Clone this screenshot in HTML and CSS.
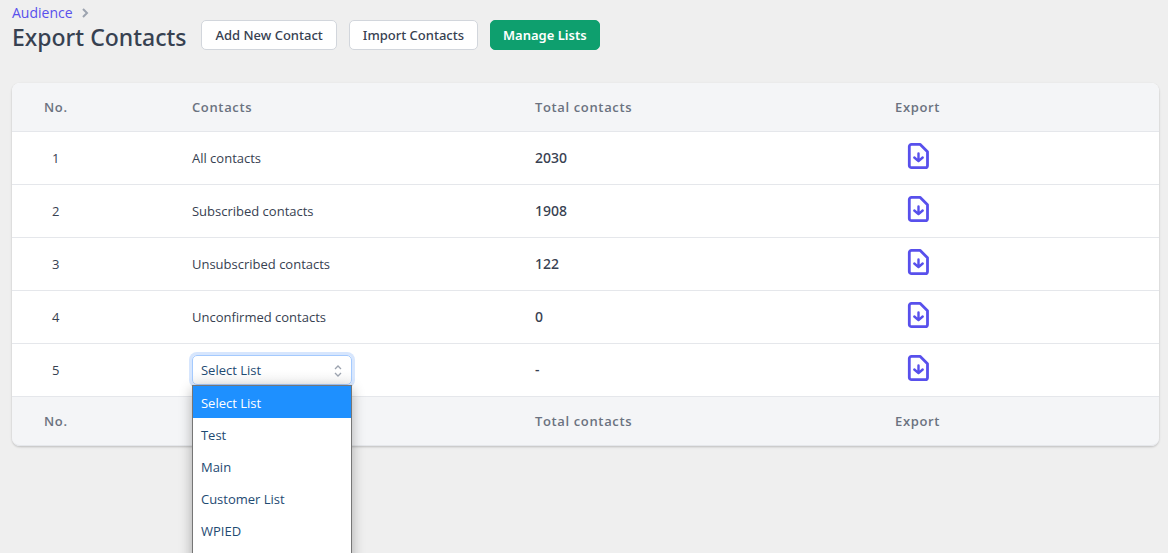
FILE: index.html
```html
<!DOCTYPE html>
<html lang="en">
<head>
<meta charset="utf-8">
<meta name="viewport" content="width=device-width, initial-scale=1">
<title>Export Contacts</title>
<link rel="stylesheet" href="styles.css">
</head>
<body>
<svg class="sprite" aria-hidden="true">
  <symbol id="file-download" viewBox="0 0 24 28">
    <path d="M4.300 2.300h8.700l7.500 7.500v13.600a2.300 2.300 0 0 1-2.300 2.300H4.600a2.300 2.300 0 0 1-2.300-2.300V4.600a2.300 2.300 0 0 1 2.300-2.300z" stroke-width="2.800"/>
    <path d="M11.500 11.500v7.500M7.300 15.500l4.200 3.700 4.200-3.700" stroke-width="2.400"/>
  </symbol>
</svg>
<main class="page">
  <header class="page-header">
    <div class="heading">
      <nav class="breadcrumb" aria-label="Breadcrumb">
        <a href="#">Audience</a>
        <svg class="chevron" viewBox="0 0 8 10" aria-hidden="true"><path d="M2 1l4 4-4 4"/></svg>
      </nav>
      <h1 class="title">Export Contacts</h1>
    </div>
    <div class="actions">
      <button class="btn" type="button">Add New Contact</button>
      <button class="btn" type="button">Import Contacts</button>
      <button class="btn btn-primary" type="button">Manage Lists</button>
    </div>
  </header>

  <table class="contacts">
    <colgroup><col class="col-no"><col class="col-contacts"><col class="col-total"><col class="col-export"></colgroup>
    <thead>
      <tr><th scope="col">No.</th><th scope="col">Contacts</th><th scope="col">Total contacts</th><th scope="col">Export</th></tr>
    </thead>
    <tbody>
      <tr><td class="no">1</td><td>All contacts</td><td class="total">2030</td><td><button class="export" type="button" aria-label="Export all contacts"><svg class="icon"><use href="#file-download"/></svg></button></td></tr>
      <tr><td class="no">2</td><td>Subscribed contacts</td><td class="total">1908</td><td><button class="export" type="button" aria-label="Export subscribed contacts"><svg class="icon"><use href="#file-download"/></svg></button></td></tr>
      <tr><td class="no">3</td><td>Unsubscribed contacts</td><td class="total">122</td><td><button class="export" type="button" aria-label="Export unsubscribed contacts"><svg class="icon"><use href="#file-download"/></svg></button></td></tr>
      <tr><td class="no">4</td><td>Unconfirmed contacts</td><td class="total">0</td><td><button class="export" type="button" aria-label="Export unconfirmed contacts"><svg class="icon"><use href="#file-download"/></svg></button></td></tr>
      <tr>
        <td class="no">5</td>
        <td>
          <div class="picker">
            <select class="select" aria-label="Contact list">
              <option>Select List</option>
              <option>Test</option>
              <option>Main</option>
              <option>Customer List</option>
              <option>WPIED</option>
            </select>
            <svg class="arrows" viewBox="0 0 8 12" aria-hidden="true"><path d="M1 4l3-3 3 3M1 8l3 3 3-3"/></svg>
            <ul class="menu" role="listbox" aria-label="Contact lists">
              <li class="option selected" role="option" aria-selected="true">Select List</li>
              <li class="option" role="option">Test</li>
              <li class="option" role="option">Main</li>
              <li class="option" role="option">Customer List</li>
              <li class="option" role="option">WPIED</li>
            </ul>
          </div>
        </td>
        <td class="total">-</td>
        <td><button class="export" type="button" aria-label="Export selected list"><svg class="icon"><use href="#file-download"/></svg></button></td>
      </tr>
    </tbody>
    <tfoot>
      <tr><th scope="col">No.</th><th></th><th scope="col">Total contacts</th><th scope="col">Export</th></tr>
    </tfoot>
  </table>
</main>
</body>
</html>
```
FILE: styles.css
```css
* {
  box-sizing: border-box;
}

body {
  margin: 0;
  background: #efefef;
  color: #374151;
  font: 13px/20px "Open Sans", "Noto Sans", sans-serif;
}

button,
select {
  font: inherit;
  color: inherit;
}

.sprite {
  display: none;
}

.page {
  min-height: 100vh;
  padding: 3px 9px 0 12px;
  overflow: hidden;
}

.page-header {
  display: flex;
  align-items: flex-end;
  gap: 15px;
  margin-bottom: 32px;
}

.breadcrumb {
  display: flex;
  align-items: center;
  gap: 8px;
}

.breadcrumb a {
  color: #5850ec;
  font-size: 14px;
  text-decoration: none;
}

.chevron {
  width: 8px;
  height: 10px;
  fill: none;
  stroke: #9ca3af;
  stroke-width: 2;
}

.title {
  margin: 0;
  font-family: "Noto Sans", sans-serif;
  font-size: 23px;
  font-weight: 500;
  line-height: 28px;
}

.actions {
  display: flex;
  gap: 12px;
  padding-bottom: 1px;
}

.btn {
  height: 30px;
  padding: 0 13px;
  border: 1px solid #d2d6dc;
  border-radius: 5px;
  background: #fff;
  font-family: "Noto Sans", sans-serif;
  font-weight: 500;
  line-height: 20px;
  white-space: nowrap;
}

.btn-primary {
  padding: 0 12px;
  border-color: #0e9f6e;
  background: #0e9f6e;
  color: #fff;
  font-weight: 600;
}

.contacts {
  width: 100%;
  table-layout: fixed;
  border-spacing: 0;
  border-radius: 8px;
  background: #fff;
  box-shadow: 0 1px 3px rgba(0, 0, 0, 0.1), 0 1px 2px rgba(0, 0, 0, 0.12);
}

.col-no { width: 12.9%; }
.col-contacts { width: 29.9%; }
.col-total { width: 31.4%; }
.col-export { width: 25.8%; }

th {
  height: 49px;
  padding: 0 32px;
  background: #f4f5f7;
  border-bottom: 1px solid #e5e7eb;
  color: #6b7280;
  font-weight: 600;
  letter-spacing: 0.05em;
  text-align: left;
}

td {
  height: 53px;
  padding: 0 32px;
  border-bottom: 1px solid #e5e7eb;
}

thead th:first-child { border-top-left-radius: 8px; }
thead th:last-child { border-top-right-radius: 8px; }
tfoot th:first-child { border-bottom-left-radius: 8px; }
tfoot th:last-child { border-bottom-right-radius: 8px; }

.no {
  padding-left: 40px;
}

.total {
  font-family: "Noto Sans", sans-serif;
  font-size: 14px;
  font-weight: 500;
}

.export {
  display: block;
  margin-left: 12px;
  padding: 0 0 4px;
  border: 0;
  background: none;
}

.icon {
  display: block;
  width: 24px;
  height: 28px;
  fill: none;
  stroke: #5850ec;
  stroke-linecap: round;
  stroke-linejoin: round;
}

.picker {
  position: relative;
  width: 160px;
  color: #1e4a72;
}

.select {
  display: block;
  width: 100%;
  height: 30px;
  padding: 0 24px 0 8px;
  appearance: none;
  border: 1px solid #a4cafe;
  border-radius: 5px;
  background: linear-gradient(#fff 50%, #f4f4f4);
  box-shadow: 0 0 0 3px #d7e6fd;
}

.arrows {
  position: absolute;
  top: 10px;
  right: 10px;
  width: 8px;
  height: 12px;
  fill: none;
  stroke: #9ca3af;
  stroke-width: 1.300;
  pointer-events: none;
}

.menu {
  position: absolute;
  z-index: 1;
  top: 100%;
  left: 0;
  width: 100%;
  margin: 0;
  padding: 0 0 32px;
  border: 1px solid #767676;
  background: #fff;
  box-shadow: 0 4px 12px rgba(0, 0, 0, 0.3);
  list-style: none;
}

.option {
  padding: 7px 8px 5px;
}

.selected {
  background: #1e90ff;
  color: #fff;
}
```
